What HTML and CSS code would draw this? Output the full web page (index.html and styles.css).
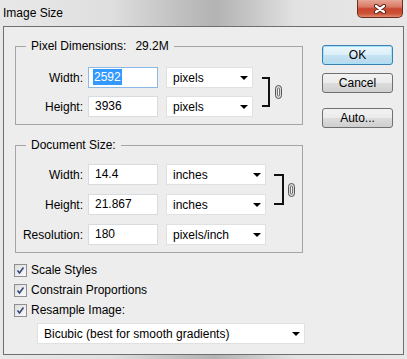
FILE: index.html
```html
<!DOCTYPE html>
<html>
<head>
    <meta charset="utf-8">
    <title>Image Size</title>
    <!-- Add style/CSS -->
    <link rel="stylesheet" href="styles.css">
</head>
<body>
    <div class="window">
        <!-- Title bar -->
        <div class="titlebar">
            <span class="title">Image Size</span>
            <button class="close" aria-label="Close">
                <svg width="14" height="10" viewBox="0 0 14 10">
                    <path d="M3 2 L11 8 M11 2 L3 8" stroke="#5a241a" stroke-width="4.2" stroke-linecap="round"/>
                    <path d="M3 2 L11 8 M11 2 L3 8" stroke="#fff" stroke-width="2.2" stroke-linecap="round"/>
                </svg>
            </button>
        </div>

        <div class="client">
            <div class="main">
                <!-- Pixel dimensions -->
                <fieldset class="group pixels">
                    <legend>Pixel Dimensions:<span class="total">29.2M</span></legend>
                    <div class="rows">
                        <label>Width:</label>
                        <div class="field focus"><span class="selected">2592</span></div>
                        <div class="dropdown small">pixels<span class="arrow"></span></div>
                        <div class="link">
                            <span class="bracket"></span>
                            <svg class="chain" width="7" height="14" viewBox="0 0 7 14">
                                <rect x="0.5" y="0.5" width="6" height="13" rx="3" fill="#d9d9d9" stroke="#555"/>
                                <rect x="2.5" y="3" width="2" height="8" rx="1" fill="#f4f4f4" stroke="#555" stroke-width="0.8"/>
                            </svg>
                        </div>

                        <label>Height:</label>
                        <div class="field">3936</div>
                        <div class="dropdown small">pixels<span class="arrow"></span></div>
                    </div>
                </fieldset>

                <!-- Document size -->
                <fieldset class="group document">
                    <legend>Document Size:</legend>
                    <div class="rows">
                        <label>Width:</label>
                        <div class="field">14.4</div>
                        <div class="dropdown wide">inches<span class="arrow"></span></div>
                        <div class="link">
                            <span class="bracket"></span>
                            <svg class="chain" width="7" height="14" viewBox="0 0 7 14">
                                <rect x="0.5" y="0.5" width="6" height="13" rx="3" fill="#d9d9d9" stroke="#555"/>
                                <rect x="2.5" y="3" width="2" height="8" rx="1" fill="#f4f4f4" stroke="#555" stroke-width="0.8"/>
                            </svg>
                        </div>

                        <label>Height:</label>
                        <div class="field">21.867</div>
                        <div class="dropdown wide">inches<span class="arrow"></span></div>

                        <label>Resolution:</label>
                        <div class="field">180</div>
                        <div class="dropdown wide">pixels/inch<span class="arrow"></span></div>
                    </div>
                </fieldset>

                <!-- Options -->
                <div class="options">
                    <div class="option">
                        <span class="box"><svg width="9" height="9" viewBox="0 0 9 9"><path d="M1.5 4.5 L3.5 7 L7.5 1.5" fill="none" stroke="#34477e" stroke-width="1.6"/></svg></span>
                        Scale Styles
                    </div>
                    <div class="option">
                        <span class="box"><svg width="9" height="9" viewBox="0 0 9 9"><path d="M1.5 4.5 L3.5 7 L7.5 1.5" fill="none" stroke="#34477e" stroke-width="1.6"/></svg></span>
                        Constrain Proportions
                    </div>
                    <div class="option">
                        <span class="box"><svg width="9" height="9" viewBox="0 0 9 9"><path d="M1.5 4.5 L3.5 7 L7.5 1.5" fill="none" stroke="#34477e" stroke-width="1.6"/></svg></span>
                        Resample Image:
                    </div>
                </div>
                <div class="dropdown resample">Bicubic (best for smooth gradients)<span class="arrow"></span></div>
            </div>

            <!-- Dialog buttons -->
            <div class="buttons">
                <button class="btn default">OK</button>
                <button class="btn">Cancel</button>
                <button class="btn auto">Auto...</button>
            </div>
        </div>
    </div>
</body>
</html>
```

FILE: styles.css
```css
body {
    margin: 0;
    font-family: "Liberation Sans", Arial, sans-serif;
    font-size: 12px;
    color: #000;
}

/* Aero glass frame */
.window {
    width: 407px;
    height: 359px;
    overflow: hidden;
    background: linear-gradient(90deg, #e8e8e8 0, #dfdfdf 110px, #c2c2c2 175px, #b3b3b3 215px, #c6c6c6 250px, #e2e2e2 295px, #e7e7e7 100%);
}

.titlebar {
    height: 26px;
    display: flex;
    justify-content: space-between;
    align-items: flex-start;
}

.title {
    padding: 6px 0 0 3px;
    line-height: 14px;
}

.close {
    width: 46px;
    height: 18px;
    margin-right: 4px;
    padding: 0;
    border: 1px solid #6d2c21;
    border-top: none;
    border-radius: 0 0 5px 5px;
    background: linear-gradient(#e7a596, #d97b66 40%, #c8462e 52%, #cd5236 80%, #e28a70);
    display: flex;
    align-items: center;
    justify-content: center;
}

/* Dialog body */
.client {
    height: 329px;
    margin: 0 3px;
    box-sizing: border-box;
    border: 1px solid #6f6f6f;
    background: #ededed;
    display: flex;
}

.main {
    width: 288px;
    padding-left: 11px;
}

/* Group boxes */
.group {
    margin: 12px 0 0;
    padding: 14px 0 7px;
    border: 1px solid #a5a5a5;
    min-width: 0;
}

.group legend {
    margin-left: 10px;
    padding: 0 5px;
    line-height: 14px;
}

.group .total {
    margin-left: 9px;
}

.group.document {
    margin-top: 13px;
    padding-top: 12px;
}

.rows {
    display: grid;
    grid-template-columns: 72px 78px auto 1fr;
    row-gap: 8px;
    align-items: center;
}

.document .rows {
    row-gap: 9px;
}

.rows label {
    text-align: right;
    padding-right: 5px;
}

.field {
    width: 70px;
    height: 21px;
    box-sizing: border-box;
    padding-left: 6px;
    border: 1px solid #d9dcdf;
    background: #fff;
    line-height: 19px;
}

.field.focus {
    padding-left: 4px;
    border-color: #8ab9e6;
}

.selected {
    padding: 1px 1px;
    background: #3399ff;
    color: #fff;
}

.dropdown {
    height: 21px;
    box-sizing: border-box;
    padding: 0 4px 0 6px;
    border: 1px solid #e1e1e1;
    background: #fff;
    display: flex;
    align-items: center;
    justify-content: space-between;
}

.dropdown .arrow {
    width: 0;
    height: 0;
    border-left: 4px solid transparent;
    border-right: 4px solid transparent;
    border-top: 4px solid #000;
}

.dropdown.small {
    width: 87px;
}

.dropdown.wide {
    width: 100px;
}

/* Constrain bracket and chain */
.link {
    grid-column: 4;
    grid-row: 1 / 3;
    display: flex;
    align-items: center;
    margin-left: 9px;
}

.bracket {
    width: 6px;
    height: 26px;
    border: 2px solid #111;
    border-left: 0;
}

.chain {
    margin-left: 5px;
}

.document .link {
    margin-left: 8px;
}

.document .bracket {
    width: 8px;
    height: 27px;
}

.document .chain {
    margin-left: 4px;
}

/* Checkboxes */
.options {
    margin-top: 7px;
}

.option {
    height: 20px;
    margin-left: -1px;
    display: flex;
    align-items: center;
    gap: 4px;
}

.box {
    width: 13px;
    height: 13px;
    box-sizing: border-box;
    border: 1px solid #8e8f8f;
    background: linear-gradient(135deg, #dcdcdc, #fbfbfb);
    display: flex;
    align-items: center;
    justify-content: center;
}

.dropdown.resample {
    width: 268px;
    margin: 3px 0 0 22px;
}

/* Buttons */
.buttons {
    width: 71px;
    margin-left: 19px;
    padding-top: 18px;
    display: flex;
    flex-direction: column;
}

.btn {
    height: 20px;
    padding: 0;
    border: 1px solid #707070;
    border-radius: 3px;
    background: linear-gradient(#f2f2f2 0, #ebebeb 50%, #dddddd 50%, #cfcfcf 100%);
    font: inherit;
    color: #000;
}

.btn + .btn {
    margin-top: 8px;
}

.btn.default {
    border-color: #3c7fb1;
    box-shadow: inset 0 0 0 1px #a6e2f8;
    background: linear-gradient(#eaf6fc 0, #dceff9 50%, #c5e3f3 50%, #b7d8ec 100%);
}

.btn.auto {
    margin-top: 15px;
}
```
